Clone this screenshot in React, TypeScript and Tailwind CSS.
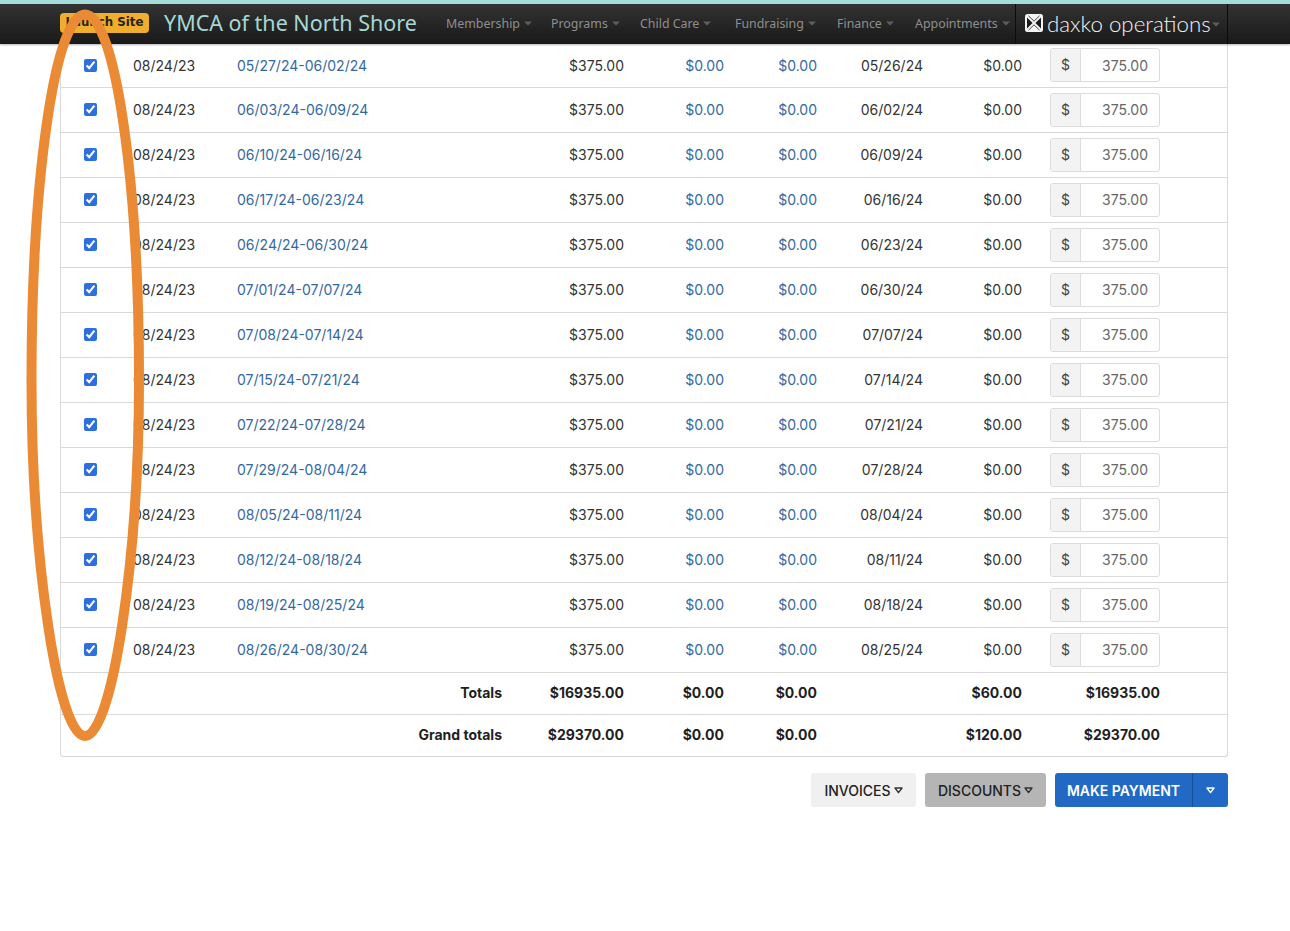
const rows = [
  ["05/27/24-06/02/24", "05/26/24"],
  ["06/03/24-06/09/24", "06/02/24"],
  ["06/10/24-06/16/24", "06/09/24"],
  ["06/17/24-06/23/24", "06/16/24"],
  ["06/24/24-06/30/24", "06/23/24"],
  ["07/01/24-07/07/24", "06/30/24"],
  ["07/08/24-07/14/24", "07/07/24"],
  ["07/15/24-07/21/24", "07/14/24"],
  ["07/22/24-07/28/24", "07/21/24"],
  ["07/29/24-08/04/24", "07/28/24"],
  ["08/05/24-08/11/24", "08/04/24"],
  ["08/12/24-08/18/24", "08/11/24"],
  ["08/19/24-08/25/24", "08/18/24"],
  ["08/26/24-08/30/24", "08/25/24"],
];

const navItems = [
  { label: "Membership", width: "w-[105px]" },
  { label: "Programs", width: "w-[89px]" },
  { label: "Child Care", width: "w-[95px]" },
  { label: "Fundraising", width: "w-[102px]" },
  { label: "Finance", width: "w-[78px]" },
  { label: "Appointments", width: "w-[100px]" },
];

const columns = "grid grid-cols-[59px_117px_275px_112px_100px_93px_106px_99px_138px]";

function Caret({ className }: { className: string }) {
  return (
    <svg width="8" height="5" viewBox="0 0 8 5" className={className}>
      <path d="M0 0.5h8L4 4.5z" fill="currentColor" />
    </svg>
  );
}

function ButtonCaret({ className }: { className: string }) {
  return (
    <svg width="9" height="7" viewBox="0 0 9 7" className={className}>
      <path d="M1 1h7L4.5 5.6z" fill="none" stroke="currentColor" strokeWidth="1.4" strokeLinejoin="round" />
    </svg>
  );
}

function Nav() {
  return (
    <header className="relative z-10 h-[44px] border-t-4 border-[#a5dcd9] bg-gradient-to-b from-[#333333] to-[#191919] shadow-[0_1px_2px_rgba(0,0,0,0.3)]">
      <div className="ml-[60px] flex h-full w-[1168px] items-center">
        <span className="mb-[2px] flex h-[20px] w-[89px] items-center justify-center rounded-[4px] bg-[#efae2d] font-['DejaVu_Sans',sans-serif] text-[11.8px] font-bold text-[#2b2210]">
          Launch Site
        </span>
        <span className="mb-[3px] ml-[15px] w-[282px] font-['Noto_Sans',sans-serif] text-[21.5px] leading-none text-[#a5d8d4]">
          YMCA of the North Shore
        </span>
        {navItems.map((item) => (
          <span
            key={item.label}
            className={`flex items-center gap-[4px] font-['Noto_Sans',sans-serif] text-[12.4px] text-[#8e8e8e] ${item.width}`}
          >
            {item.label}
            <Caret className="text-[#5f5f5f]" />
          </span>
        ))}
        <div className="flex h-full w-[213px] items-center border-x border-[#0c0c0c] pl-[9px]">
          <svg width="18" height="18" viewBox="0 0 18 18" className="mb-[2px]">
            <rect width="18" height="18" rx="2.5" fill="#f4f4f4" />
            <path d="M2 3.5 7.6 9 2 14.5zM16 3.5 10.4 9l5.6 5.5z" fill="#1c1c1c" />
            <path d="M3.5 1.8 9 7.2l5.500-5.400M3.5 16.200 9 10.800l5.500 5.400" fill="none" stroke="#1c1c1c" strokeWidth="0.8" />
          </svg>
          <span className="ml-[4px] font-['Lato',sans-serif] text-[22.300px] font-light leading-none text-[#f2f2f2]">
            daxko operations
          </span>
          <Caret className="ml-[1px] text-[#5f5f5f]" />
        </div>
      </div>
    </header>
  );
}

function PaymentRow({ range, due, first }: { range: string; due: string; first: boolean }) {
  return (
    <div className={`${columns} items-center border-b border-[#d9d9d9] pb-[1px] ${first ? "h-[44px]" : "h-[45px]"}`}>
      <div className="flex justify-center">
        <input type="checkbox" checked readOnly className="size-[13px] accent-[#2d6fdf]" />
      </div>
      <div className="pl-[13px] text-[#333333]">08/24/23</div>
      <a className="text-[#33689f]">{range}</a>
      <div className="text-right text-[#333333]">$375.00</div>
      <a className="text-right text-[#33689f]">$0.00</a>
      <a className="text-right text-[#33689f]">$0.00</a>
      <div className="text-right text-[#333333]">{due}</div>
      <div className="text-right text-[#333333]">$0.00</div>
      <div className="flex justify-end">
        <div className="flex h-[34px] w-[110px] overflow-hidden rounded-[3px] border border-[#dcdcdc]">
          <span className="flex w-[30px] justify-center border-r border-[#dcdcdc] bg-[#f3f3f3] pt-[5px] text-[#444444]">$</span>
          <span className="flex flex-1 items-center justify-end pr-[11px] text-[#666666]">375.00</span>
        </div>
      </div>
    </div>
  );
}

function TotalRow({ label, a, b, c, last }: { label: string; a: string; b: string; c: string; last: boolean }) {
  return (
    <div className={`${columns} items-center pb-[3px] font-bold text-[#1f1f1f] ${last ? "h-[41px]" : "h-[42px] border-b border-[#d9d9d9]"}`}>
      <div className="col-span-3 pr-[10px] text-right">{label}</div>
      <div className="text-right">{a}</div>
      <div className="text-right">$0.00</div>
      <div className="text-right">$0.00</div>
      <div />
      <div className="text-right">{b}</div>
      <div className="text-right">{c}</div>
    </div>
  );
}

export default function App() {
  return (
    <div className="relative h-[931px] overflow-hidden bg-white font-['Inter',sans-serif] text-[14px]">
      <Nav />
      <main className="ml-[60px] w-[1168px]">
        <div className="rounded-b-[3px] border-x border-b border-[#d9d9d9]">
          {rows.map(([range, due], i) => (
            <PaymentRow key={range} range={range} due={due} first={i === 0} />
          ))}
          <TotalRow label="Totals" a="$16935.00" b="$60.00" c="$16935.00" last={false} />
          <TotalRow label="Grand totals" a="$29370.00" b="$120.00" c="$29370.00" last={true} />
        </div>
        <div className="mt-[16px] flex justify-end gap-[9px] font-medium">
          <button className="flex h-[34px] w-[105px] items-center justify-center gap-[3px] rounded-[3px] bg-[#f0f0f0] text-[#222222]">
            INVOICES <ButtonCaret className="text-[#333333]" />
          </button>
          <button className="flex h-[34px] w-[121px] items-center justify-center gap-[3px] rounded-[3px] bg-[#b5b5b5] text-[#222222]">
            DISCOUNTS <ButtonCaret className="text-[#333333]" />
          </button>
          <div className="flex h-[34px] w-[173px] overflow-hidden rounded-[3px] bg-[#2169c4] font-semibold text-white">
            <button className="flex-1 border-r border-[#174f96]">MAKE PAYMENT</button>
            <button className="flex w-[35px] items-center justify-center">
              <ButtonCaret className="text-white" />
            </button>
          </div>
        </div>
      </main>
      {/* hand-drawn highlight over the checkbox column */}
      <svg className="pointer-events-none absolute left-0 top-0 z-20" width="170" height="750" viewBox="0 0 170 750">
        <path
          d="M85 14.500C55 14.500 31.500 180 31.500 380C31.500 560 58 736 85 736C112 736 139 560 139 380C139 180 115 14.500 85 14.500Z"
          fill="none"
          stroke="#ea8a35"
          strokeWidth="10"
        />
      </svg>
    </div>
  );
}
